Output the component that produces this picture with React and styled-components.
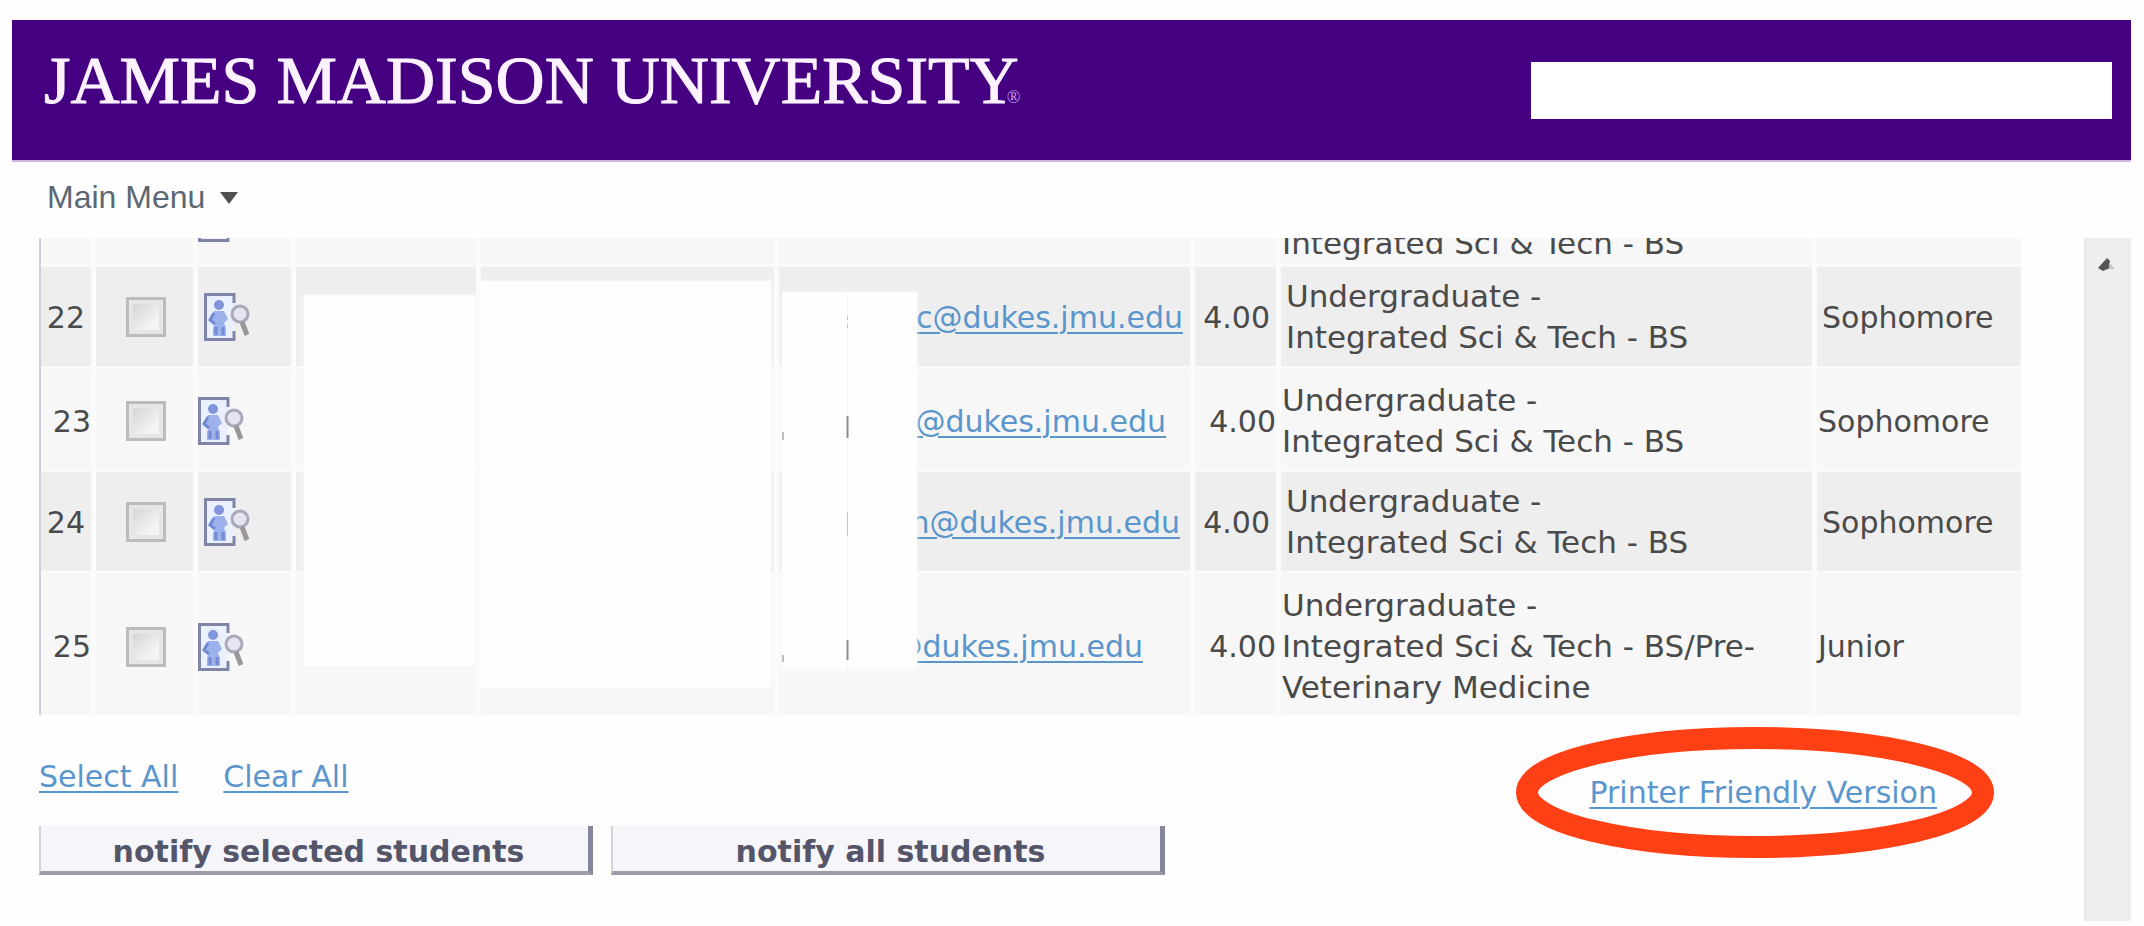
import React from "react";
import styled, { createGlobalStyle } from "styled-components";

const GlobalStyle = createGlobalStyle`
  *, *::before, *::after { box-sizing: border-box; }
  body {
    margin: 0;
    background: #fefefe;
    color: #4a4a4a;
    font-family: "DejaVu Sans", Verdana, sans-serif;
    font-size: 30px;
    line-height: 41px;
  }
`;

const Page = styled.div`
  display: flex;
  flex-direction: column;
  min-height: 100vh;
  padding: 20px 13px 5px 12px;
`;

const Header = styled.header`
  display: flex;
  align-items: center;
  justify-content: space-between;
  height: 142px;
  padding: 0 19px 0 32px;
  background: #450082;
  border-bottom: 2px solid #cdb4e4;
`;

const Wordmark = styled.h1`
  margin: 0 0 4px;
  color: #fdf2ff;
  font: 400 68px/80px "Liberation Serif", "Times New Roman", serif;
  -webkit-text-stroke: 1px #fdf2ff;
  white-space: nowrap;
`;

const Registered = styled.span`
  margin-left: -12px;
  color: #c79cf0;
  font-size: 18px;
  -webkit-text-stroke: 0;
`;

const SearchBox = styled.input`
  width: 581px;
  height: 57px;
  padding: 0 12px;
  border: 0;
  border-radius: 0;
  background: #fff;
  font: inherit;
`;

const MenuBar = styled.nav`
  display: flex;
  align-items: center;
  height: 76px;
  padding: 0 35px 6px;
`;

const MenuButton = styled.button`
  display: flex;
  align-items: center;
  gap: 14px;
  padding: 0;
  border: 0;
  background: none;
  color: #5b6873;
  font: 32px/40px "Liberation Sans", Arial, sans-serif;
`;

const Body = styled.div`
  display: flex;
  flex: 1;
`;

const Content = styled.main`
  flex: 1;
  min-width: 0;
  padding: 0 63px 0 27px;
`;

const ScrollTrack = styled.div`
  display: flex;
  justify-content: center;
  align-items: flex-start;
  width: 47px;
  padding: 20px 6px 0 0;
  background: #eeeeee;
  border-left: 3px solid #e9e9e9;
`;

const Roster = styled.div`
  position: relative;
`;

const Table = styled.table`
  width: 100%;
  table-layout: fixed;
  border-collapse: separate;
  border-spacing: 0;
  border-left: 2px solid #cfcfda;
`;

const Col = styled.col`
  width: ${(p) => (p.$w ? `${p.$w}px` : "auto")};
`;

const Row = styled.tr`
  background: ${(p) => (p.$shaded ? "#eeeeee" : "#f7f7f7")};
`;

const Cell = styled.td`
  padding: ${(p) => (p.$shaded ? "9px 6px 8px 5px" : "11px 0 7px 1px")};
  border-top: 3px solid #fafafa;
  border-left: 5px solid #fbfbfb;
  vertical-align: middle;
  text-align: ${(p) => p.$align || "left"};
  white-space: ${(p) => (p.$wrap ? "pre-line" : "nowrap")};
`;

const NumberCell = styled(Cell)`
  padding-right: ${(p) => (p.$shaded ? 6 : 0)}px;
  padding-left: 0;
  border-left: 0;
`;

const CheckCell = styled(Cell)`
  padding-left: 30px;
`;

const IconCell = styled(Cell)`
  padding-left: ${(p) => (p.$shaded ? 6 : 0)}px;
`;

const EmailCell = styled(Cell)`
  padding-right: ${(p) => p.$end}px;
`;

const ProgramCell = styled(Cell)`
  font-size: 31px;
`;

const CutCell = styled.td`
  padding: 0;
  border-left: ${(p) => (p.$first ? 0 : "5px solid #fbfbfb")};
`;

const CutBox = styled.div`
  display: flex;
  align-items: flex-end;
  height: 26px;
  padding: 0 0 ${(p) => p.$lift || 0}px ${(p) => (p.$lift ? 0 : 1)}px;
  overflow: hidden;
  font-size: 31px;
  white-space: nowrap;
`;

const Check = styled.input`
  appearance: none;
  display: block;
  width: 40px;
  height: 40px;
  margin: 0;
  border: 3px solid #bcbcbc;
  border-radius: 0;
  background: linear-gradient(135deg, #cfcfcf, #f4f4f4 70%);
  box-shadow: inset 0 0 0 4px #e6e6e6;
`;

const Link = styled.a`
  color: #5a96cc;
  text-decoration: underline;
  text-decoration-thickness: 2px;
  text-underline-offset: 4px;
`;

const Cover = styled.div`
  position: absolute;
  left: ${(p) => p.$x}px;
  top: ${(p) => p.$y}px;
  width: ${(p) => p.$w}px;
  height: ${(p) => p.$h}px;
  background: #fefefe;
  box-shadow: 0 0 4px #fafafa;
`;

const Actions = styled.div`
  display: flex;
  justify-content: space-between;
  padding: 41px 84px 0 0;
`;

const LinkRow = styled.div`
  display: flex;
  gap: 45px;
  margin-bottom: 29px;
`;

const ButtonRow = styled.div`
  display: flex;
  gap: 18px;
`;

const NotifyButton = styled.button`
  width: 554px;
  height: 49px;
  padding: 6px 0 0 8px;
  border: 0 solid #9d9dae;
  border-width: 0 5px 4px 2px;
  border-right-color: #85859b;
  border-left-color: #d2d2dc;
  background: #f6f6fa;
  color: #55556a;
  font: bold 30px/39px "DejaVu Sans", Verdana, sans-serif;
`;

const PrinterSpot = styled.div`
  position: relative;
  align-self: flex-start;
  margin-top: 16px;
`;

const Ring = styled.svg`
  position: absolute;
  left: -73px;
  top: -45px;
  pointer-events: none;
`;

function ProfileIcon() {
  return (
    <svg width="46" height="48" viewBox="0 0 46 48" style={{ display: "block" }} aria-hidden="true">
      <rect x="1" y="1" width="29" height="46" fill="#eaf0fd" />
      <path d="M30 10V1.5H1.5v45H30V38" fill="none" stroke="#8085a8" strokeWidth="3" />
      <circle cx="15" cy="12" r="5" fill="#8196da" />
      <path d="M10 18h10l4 8-4 4 2 5v8H9v-8l2-5-5-3z" fill="#9db2ec" />
      <path d="M10 20l-4 7 5 4M12 34v8M19 34v8" fill="none" stroke="#728ad3" strokeWidth="3" />
      <circle cx="36" cy="21" r="8" fill="#e4e4f2" stroke="#aaa9ba" strokeWidth="3" />
      <path d="M38 29l5 13" stroke="#9b9799" strokeWidth="5" />
    </svg>
  );
}

const COLUMNS = [50, 102, 98, 185, 298, 416, 86, null, 209];

const STUDENTS = [
  { id: 22, email: "c@dukes.jmu.edu", end: 7, program: "Undergraduate -\nIntegrated Sci & Tech - BS", level: "Sophomore" },
  { id: 23, email: "@dukes.jmu.edu", end: 24, program: "Undergraduate -\nIntegrated Sci & Tech - BS", level: "Sophomore" },
  { id: 24, email: "n@dukes.jmu.edu", end: 10, program: "Undergraduate -\nIntegrated Sci & Tech - BS", level: "Sophomore" },
  { id: 25, email: "@dukes.jmu.edu", end: 47, program: "Undergraduate -\nIntegrated Sci & Tech - BS/Pre-\nVeterinary Medicine", level: "Junior" },
];

function StudentRow({ student }) {
  const shaded = student.id % 2 === 0;
  return (
    <Row $shaded={shaded}>
      <NumberCell $shaded={shaded} $align="right">{student.id}</NumberCell>
      <CheckCell $shaded={shaded}>
        <Check type="checkbox" aria-label={`Select student ${student.id}`} />
      </CheckCell>
      <IconCell $shaded={shaded}><ProfileIcon /></IconCell>
      <Cell $shaded={shaded} />
      <Cell $shaded={shaded} />
      <EmailCell $shaded={shaded} $align="right" $end={student.end}>
        <Link href="#email">{student.email}</Link>
      </EmailCell>
      <Cell $shaded={shaded} $align="right">4.00</Cell>
      <ProgramCell $shaded={shaded} $wrap>{student.program}</ProgramCell>
      <Cell $shaded={shaded}>{student.level}</Cell>
    </Row>
  );
}

export default function App() {
  return (
    <>
      <GlobalStyle />
      <Page>
        <Header>
          <Wordmark>
            JAMES MADISON UNIVERSITY<Registered>®</Registered>
          </Wordmark>
          <SearchBox type="text" aria-label="Search" />
        </Header>
        <MenuBar>
          <MenuButton type="button">
            Main Menu
            <svg width="20" height="13" viewBox="0 0 20 13" aria-hidden="true">
              <path d="M1 1h18l-9 12z" fill="#505050" />
            </svg>
          </MenuButton>
        </MenuBar>
        <Body>
          <Content>
            <Roster>
              <Table>
                <colgroup>
                  {COLUMNS.map((w, i) => <Col key={i} $w={w} />)}
                </colgroup>
                <tbody>
                  <Row>
                    <CutCell $first />
                    <CutCell />
                    <CutCell><CutBox $lift={22}><ProfileIcon /></CutBox></CutCell>
                    <CutCell />
                    <CutCell />
                    <CutCell />
                    <CutCell />
                    <CutCell><CutBox>Integrated Sci &amp; Tech - BS</CutBox></CutCell>
                    <CutCell />
                  </Row>
                  {STUDENTS.map((s) => <StudentRow key={s.id} student={s} />)}
                </tbody>
              </Table>
              <Cover $x={265} $y={57} $w={171} $h={371} />
              <Cover $x={441} $y={43} $w={291} $h={407} />
              <Cover $x={743} $y={54} $w={135} $h={377}>
                <svg width="135" height="377" viewBox="0 0 135 377" aria-hidden="true">
                  <path d="M65.500 0V377" stroke="#f4f4f4" />
                  <path d="M65.500 24v4M65.500 32v4M65.500 220v24" stroke="#c4c4c4" />
                  <path d="M65.500 124v22M65.500 348v20" stroke="#8c8c8c" strokeWidth="2" />
                  <path d="M1 140v8M1 363v7" stroke="#bdbdbd" strokeWidth="2" />
                </svg>
              </Cover>
            </Roster>
            <Actions>
              <div>
                <LinkRow>
                  <Link href="#select">Select All</Link>
                  <Link href="#clear">Clear All</Link>
                </LinkRow>
                <ButtonRow>
                  <NotifyButton type="button">notify selected students</NotifyButton>
                  <NotifyButton type="button">notify all students</NotifyButton>
                </ButtonRow>
              </div>
              <PrinterSpot>
                <Link href="#print">Printer Friendly Version</Link>
                <Ring width="478" height="131" viewBox="0 0 478 131" aria-hidden="true">
                  <ellipse cx="239" cy="65.500" rx="228" ry="54.500" fill="none" stroke="#ff3f14" strokeWidth="22" />
                </Ring>
              </PrinterSpot>
            </Actions>
          </Content>
          <ScrollTrack>
            <svg width="17" height="13" viewBox="0 0 17 13" aria-hidden="true">
              <path d="M0 10L9 0l3 3v7l-7 3z" fill="#555" />
              <path d="M11 4l6 7h-6z" fill="#c4c4c4" />
            </svg>
          </ScrollTrack>
        </Body>
      </Page>
    </>
  );
}
